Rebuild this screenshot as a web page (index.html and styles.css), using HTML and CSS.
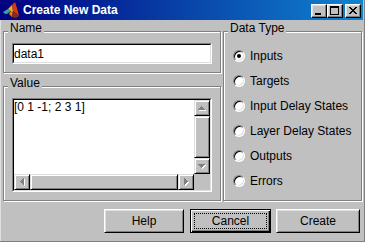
FILE: index.html
```html
<!DOCTYPE html>
<html>
<head>
<meta charset="utf-8">
<link rel="stylesheet" href="styles.css">
</head>
<body>
<div class="window">
  <div class="titlebar">
    <svg class="app-icon" viewBox="0 0 16 16" width="16" height="16">
      <polygon points="0,10 5,7 8,9 4,12 2,12" fill="#3aa0a0"/>
      <polygon points="0,10 2,12 4,12 1,11" fill="#1c5a78"/>
      <polygon points="5,7 9,3 10,9 8,9" fill="#f4b020"/>
      <polygon points="8,9 10,9 9,15 6,12" fill="#f07818"/>
      <polygon points="9,3 12,0 14,6 16,14 10,9" fill="#d83a10"/>
      <polygon points="10,9 16,14 13,16 9,15" fill="#902a10"/>
    </svg>
    <span class="title">Create New Data</span>
    <div class="caption-btns">
      <div class="cbtn min">
        <svg viewBox="0 0 14 12" width="14" height="12" shape-rendering="crispEdges"><path d="M3 8h6v2H3z" fill="#000"/></svg>
      </div>
      <div class="cbtn max">
        <svg viewBox="0 0 14 12" width="14" height="12" shape-rendering="crispEdges"><path d="M2 1h9v2H2z M2 3h1v7H2z M10 3h1v7h-1z M2 9h9v1H2z" fill="#000"/></svg>
      </div>
      <div class="cbtn close">
        <svg viewBox="0 0 14 12" width="14" height="12" shape-rendering="crispEdges"><path d="M3 2h2v1H3z M9 2h2v1H9z M4 3h2v1H4z M8 3h2v1H8z M5 4h4v1H5z M6 5h2v1H6z M5 6h4v1H5z M4 7h2v1H4z M8 7h2v1H8z M3 8h2v1H3z M9 8h2v1H9z" fill="#000"/></svg>
      </div>
    </div>
  </div>
  <div class="main">
    <div class="panels">
      <div class="left">
        <div class="group name-group">
          <span class="legend">Name</span>
          <div class="field"><div class="field-in">data1</div></div>
        </div>
        <div class="group value-group">
          <span class="legend">Value</span>
          <div class="area">
            <div class="area-in">
              <div class="text">[0 1 -1; 2 3 1]</div>
              <div class="vscroll">
                <div class="sbtn">
                  <svg viewBox="0 0 14 14" width="14" height="14" shape-rendering="crispEdges"><g fill="#fff" transform="translate(1,1)"><path d="M6 5h1v1H6z M5 6h3v1H5z M4 7h5v1H4z M3 8h7v1H3z"/></g><path fill="#808080" d="M6 5h1v1H6z M5 6h3v1H5z M4 7h5v1H4z M3 8h7v1H3z"/></svg>
                </div>
                <div class="thumb"></div>
                <div class="sbtn">
                  <svg viewBox="0 0 14 14" width="14" height="14" shape-rendering="crispEdges"><g fill="#fff" transform="translate(1,1)"><path d="M3 5h7v1H3z M4 6h5v1H4z M5 7h3v1H5z M6 8h1v1H6z"/></g><path fill="#808080" d="M3 5h7v1H3z M4 6h5v1H4z M5 7h3v1H5z M6 8h1v1H6z"/></svg>
                </div>
              </div>
              <div class="hscroll">
                <div class="sbtn">
                  <svg viewBox="0 0 14 14" width="14" height="14" shape-rendering="crispEdges"><g fill="#fff" transform="translate(1,1)"><path d="M5 6h1v1H5z M6 5h1v3H6z M7 4h1v5H7z M8 3h1v7H8z"/></g><path fill="#808080" d="M5 6h1v1H5z M6 5h1v3H6z M7 4h1v5H7z M8 3h1v7H8z"/></svg>
                </div>
                <div class="thumb"></div>
                <div class="sbtn">
                  <svg viewBox="0 0 14 14" width="14" height="14" shape-rendering="crispEdges"><g fill="#fff" transform="translate(1,1)"><path d="M5 3h1v7H5z M6 4h1v5H6z M7 5h1v3H7z M8 6h1v1H8z"/></g><path fill="#808080" d="M5 3h1v7H5z M6 4h1v5H6z M7 5h1v3H7z M8 6h1v1H8z"/></svg>
                </div>
              </div>
              <div class="corner"></div>
            </div>
          </div>
        </div>
      </div>
      <div class="group type-group">
        <span class="legend">Data Type</span>
        <div class="radios">
          <div class="radio-row"><span class="radio on"></span><span>Inputs</span></div>
          <div class="radio-row"><span class="radio"></span><span>Targets</span></div>
          <div class="radio-row"><span class="radio"></span><span>Input Delay States</span></div>
          <div class="radio-row"><span class="radio"></span><span>Layer Delay States</span></div>
          <div class="radio-row"><span class="radio"></span><span>Outputs</span></div>
          <div class="radio-row"><span class="radio"></span><span>Errors</span></div>
        </div>
      </div>
    </div>
    <div class="buttons">
      <div class="btn help">Help</div>
      <div class="btn cancel">Cancel</div>
      <div class="btn create">Create</div>
    </div>
  </div>
</div>
</body>
</html>
```
FILE: styles.css
```css
* { box-sizing: border-box; }
body {
  margin: 0;
  font-family: "Liberation Sans", Arial, sans-serif;
  font-size: 12px;
  line-height: 14px;
  color: #000;
}
.window {
  width: 365px;
  height: 242px;
  background: #c0c0c0;
  border-right: 1px solid #808080;
  border-bottom: 1px solid #808080;
  display: flex;
  flex-direction: column;
}
.titlebar {
  height: 20px;
  flex: none;
  margin-right: 1px;
  background: linear-gradient(to right, #000080, #1084d0);
  display: flex;
  align-items: center;
  color: #fff;
}
.app-icon { margin-left: 3px; flex: none; }
.title { margin-left: 4px; font-weight: bold; }
.caption-btns {
  margin-left: auto;
  margin-right: 2px;
  align-self: flex-start;
  margin-top: 4px;
  display: flex;
}
.cbtn {
  width: 16px;
  height: 14px;
  background: #c0c0c0;
  border: 1px solid;
  border-color: #fff #000 #000 #fff;
  box-shadow: inset -1px -1px #808080, inset 1px 1px #dfdfdf;
}
.cbtn svg { display: block; }
.cbtn.max { margin-right: 2px; }
.main {
  flex: 1;
  border-left: 1px solid #dfdfdf;
  padding: 11px 2px 0 2px;
  display: flex;
  flex-direction: column;
}
.panels { display: flex; gap: 2px; height: 170px; flex: none; }
.left { width: 218px; display: flex; flex-direction: column; gap: 13px; }
.group {
  position: relative;
  border: 1px solid #808080;
  box-shadow: inset 1px 1px #fff, 1px 1px #fff;
}
.legend {
  position: absolute;
  left: 4px;
  top: -11px;
  padding: 0 2px;
  background: #c0c0c0;
}
.name-group { height: 42px; padding: 11px 8px 0; }
.value-group { height: 115px; padding: 11px 8px 0; }
.type-group { flex: 1; padding: 11px 0 0 9px; }
.field, .area {
  width: 200px;
  border: 1px solid;
  border-color: #808080 #fff #fff #808080;
}
.field { height: 21px; }
.area { height: 94px; }
.field-in, .area-in {
  height: 100%;
  border: 1px solid;
  border-color: #000 #dfdfdf #dfdfdf #000;
  background: #fff;
}
.field-in { display: flex; align-items: center; }
.area-in {
  display: grid;
  grid-template-columns: 1fr 16px;
  grid-template-rows: 1fr 16px;
}
.vscroll { display: flex; flex-direction: column; }
.hscroll { display: flex; }
.corner { background: #c0c0c0; }
.sbtn, .thumb {
  background: #c0c0c0;
  border: 1px solid;
  border-color: #dfdfdf #000 #000 #dfdfdf;
  box-shadow: inset 1px 1px #fff, inset -1px -1px #808080;
}
.sbtn { width: 16px; height: 16px; flex: none; }
.sbtn svg { display: block; }
.thumb { flex: 1; }
.radios { display: flex; flex-direction: column; }
.radio-row { height: 25px; display: flex; align-items: center; gap: 5px; }
.radio {
  width: 12px;
  height: 12px;
  flex: none;
  border-radius: 50%;
  border: 1px solid;
  border-color: #808080 #fff #fff #808080;
  background: #fff;
  box-shadow: inset 1px 1px #000, inset -1px -1px #dfdfdf;
  display: flex;
  align-items: center;
  justify-content: center;
}
.radio.on::after {
  content: "";
  width: 4px;
  height: 4px;
  border-radius: 50%;
  background: #000;
}
.buttons {
  display: flex;
  justify-content: flex-end;
  margin-top: 8px;
  padding-right: 2px;
}
.btn {
  height: 24px;
  display: flex;
  align-items: center;
  justify-content: center;
  border: 1px solid;
  border-color: #fff #000 #000 #fff;
  box-shadow: inset 1px 1px #dfdfdf, inset -1px -1px #808080;
}
.help { width: 80px; }
.cancel {
  width: 81px;
  margin-left: 6px;
  border-color: #000;
  box-shadow: inset 1px 1px #fff, inset -1px -1px #000, inset -2px -2px #808080;
  outline: 1px dotted #000;
  outline-offset: -5px;
}
.create { width: 84px; margin-left: 5px; }
```
